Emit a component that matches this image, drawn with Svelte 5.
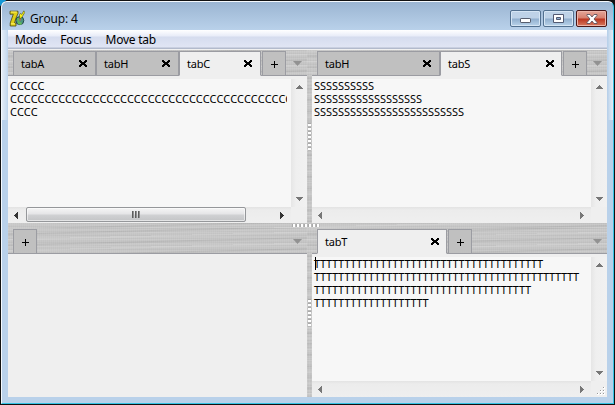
<script>
  const panes = [
    {
      id: 'tl', tabs: [{ name: 'tabA', w: 83 }, { name: 'tabH', w: 83 }, { name: 'tabC', w: 82, active: true }],
      lines: [5, 44, 4].map((n) => 'C'.repeat(n)), letter: 'c', thumb: true
    },
    {
      id: 'tr', tabs: [{ name: 'tabH', w: 123 }, { name: 'tabS', w: 122, active: true }],
      lines: [10, 18, 25].map((n) => 'S'.repeat(n)), letter: 's'
    },
    { id: 'bl', tabs: [], lines: null },
    {
      id: 'br', tabs: [{ name: 'tabT', w: 130, active: true }],
      lines: [38, 44, 36, 19].map((n) => 'T'.repeat(n)), letter: 't', caret: true
    }
  ];
  const menu = ['Mode', 'Focus', 'Move tab'];
</script>

{#snippet arrow(dir)}
  <svg class="arrow" width="7" height="7" viewBox="0 0 7 7" shape-rendering="crispEdges">
    {#if dir === 'up'}<path d="M3 1h1v1h1v1h1v1h1v1H0V4h1V3h1V2h1z" />
    {:else if dir === 'down'}<path d="M0 2h7v1H6v1H5v1H4v1H3V5H2V4H1V3H0z" />
    {:else if dir === 'left'}<path d="M4 0h1v7H4V6H3V5H2V4H1V3h1V2h1V1h1z" />
    {:else}<path d="M2 0h1v1h1v1h1v1h1v1H5v1H4v1H3v1H2z" />{/if}
  </svg>
{/snippet}

{#snippet pane(p)}
  <section class="pane {p.id}">
    <div class="bar">
      {#each p.tabs as t}
        <div class="tab" class:active={t.active} style="width:{t.w}px">
          <span>{t.name}</span>
          <svg width="8" height="7" viewBox="0 0 8 7" shape-rendering="crispEdges"><path d="M0 0h2v1h1v1h2V1h1V0h2v1H8v1H7v1H6v1h1v1h1v2H6V6H5V5H3v1H2v1H0V5h1V4h1V3H1V2H0z" /></svg>
        </div>
      {/each}
      <div class="tab plus"><svg width="7" height="7" viewBox="0 0 7 7" shape-rendering="crispEdges"><path d="M3 0h1v3h3v1H4v3H3V4H0V3h3z" /></svg></div>
      <svg class="drop" width="9" height="5" viewBox="0 0 9 5"><path d="M0 0h9L4.5 5z" /></svg>
    </div>
    {#if p.lines}
      <div class="memo">
        <div class="text {p.letter}">
          {#if p.caret}<i class="caret"></i>{/if}
          {#each p.lines as l}<div>{l}</div>{/each}
        </div>
        <div class="vs">{@render arrow('up')}{@render arrow('down')}</div>
        <div class="hs" class:on={p.thumb}>
          {@render arrow('left')}
          {#if p.thumb}<div class="thumb"><i></i><i></i><i></i></div>{/if}
          {@render arrow('right')}
        </div>
        <div class="corner">
          {#if p.caret}
            <svg width="8" height="8" viewBox="0 0 8 8" shape-rendering="crispEdges"><path d="M6 0h2v2H6zM3 3h2v2H3zM6 3h2v2H6zM0 6h2v2H0zM3 6h2v2H3zM6 6h2v2H6z" fill="#fff" /><path d="M6 0h1v1H6zM3 3h1v1H3zM6 3h1v1H6zM0 6h1v1H0zM3 6h1v1H3zM6 6h1v1H6z" fill="#999" /></svg>
          {/if}
        </div>
      </div>
    {/if}
  </section>
{/snippet}

<div class="desktop">
  <div class="window">
    <header>
      <svg class="logo" width="16" height="17" viewBox="0 0 16 17">
        <circle cx="10.8" cy="10.6" r="4" fill="#4b9580" stroke="#25484b" />
        <path d="M8 8l2 0 0 3 3 2-1 2-3-1z" fill="#62b859" />
        <path d="M10 8.5h2v2h-2z" fill="#b46754" />
        <path d="M1 1.2h8v2.3L6.6 9l-1 4H7v3H1.2v-3L4.3 4.2H1z" fill="#e0cf18" stroke="#4a4410" stroke-width=".8" />
        <path d="M1.8 2h6M2 13.8h4" stroke="#fff36a" stroke-width="1" />
        <path d="M11 9l-.6-4 1-1.6 1.4 1 2-3.6 1 1.6-3 5z" fill="#f8f41c" stroke="#4b4c12" stroke-width=".6" />
      </svg>
      <h1>Group: 4</h1>
      <div class="buttons">
        <b><svg width="11" height="5" viewBox="0 0 11 5"><rect x=".5" y=".5" width="10" height="4" rx=".6" fill="#fff" stroke="#565d6d" /></svg></b>
        <b><svg width="11" height="9" viewBox="0 0 11 9"><path d="M.5.5h10v8H.5z" fill="#fff" stroke="#535a72" /><path d="M3.5 3.5h4v2h-4z" fill="#8fb0d1" stroke="#535a72" /></svg></b>
        <b class="close"><svg width="12" height="10" viewBox="0 0 12 10"><path d="M1 .5h3L6 3 8 .5h3v1L8 5l3 3.5v1H8L6 7 4 9.5H1v-1L4 5 1 1.5z" fill="#fff" stroke="#5d5360" stroke-width=".9" /></svg></b>
      </div>
    </header>
    <main>
      <nav>{#each menu as m}<span>{m}</span>{/each}</nav>
      <div class="grid">
        {@render pane(panes[0])}
        <div class="vsplit one"><i></i></div>
        {@render pane(panes[1])}
        <div class="hsplit"><i></i></div>
        {@render pane(panes[2])}
        <div class="vsplit two"><i></i></div>
        {@render pane(panes[3])}
      </div>
    </main>
  </div>
</div>

<style>
  :global(body) { margin: 0; overflow: hidden; }
  * { box-sizing: border-box; }
  .desktop { width: 615px; height: 405px; background: linear-gradient(135deg, #1597d5 0 4px, #111 5px); padding: 1px; font: 11px/13px "Noto Sans", "Open Sans", sans-serif; color: #000; }
  .window {
    height: 403px; border: 1px solid #35c3e4; border-top-color: #f5f9fd; border-left-color: #f4f9fe; border-radius: 6px 6px 0 0; padding: 0 5px 6px 6px;
    background: linear-gradient(#9bb5d2, #b9d1ea 28px, transparent 28px), linear-gradient(90deg, #fff9, #fff3 5px, transparent 6px calc(100% - 5px), #fff3 calc(100% - 4px), #fff9) 0 0 / 100% 118px no-repeat, #b9d1ea;
  }
  header { height: 28px; display: flex; align-items: flex-start; padding: 8px 1px 0 1px; }
  h1 { margin: 0 0 0 5px; font: 12px/17px "Open Sans", "Noto Sans", sans-serif; letter-spacing: -.1px; flex: 1; }
  .buttons { display: flex; gap: 2px; }
  .buttons b { width: 31px; height: 17px; display: flex; align-items: center; justify-content: center; border: 1px solid #52708f; border-radius: 2px; box-shadow: inset 0 0 0 1px #d5e5f4; background: linear-gradient(#bed2e7 0 7px, #91afce 8px, #b9d3ea); }
  .buttons b:first-child { padding-top: 4px; }
  .buttons .close { border-color: #4b1717; background: linear-gradient(#e4a699, #d77f6e 7px, #bb3520 8px, #d77960); box-shadow: inset 0 0 0 1px #edb5a9; }
  main { width: 599px; height: 367px; display: flex; flex-direction: column; }
  nav { height: 20px; display: flex; gap: 14px; padding: 3px 7px 0; font-size: 12px; line-height: 14px; letter-spacing: -.24px; border-bottom: 1px solid #f0f0f0; background: linear-gradient(#fff 0, #e8ecf8 6px, #d5dcee 7px, #e0e5f4 17px, #b2bacc 18px 19px); }
  .grid { height: 347px; display: grid; grid-template: 173px 5px 169px / 299px 5px 295px; }
  .hsplit { grid-column: 1 / 4; display: flex; justify-content: center; padding-right: 4px; }
  .vsplit { display: flex; justify-content: center; align-items: center; }
  .vsplit, .hsplit, .bar {
    background:
      repeating-linear-gradient(90deg, #fff1 0 1px, #0000 1px 2px),
      repeating-linear-gradient(178.6deg, #fff2 0 1px, #0000 2px 5px, #0001 6px, #fff1 8px, #0000 9px 11px),
      repeating-linear-gradient(#bfbfbf 0 1px, #c6c6c6 1px 3px, #c1c1c1 3px 4px, #c8c8c8 4px 5px, #c3c3c3 5px 7px);
  }
  .vsplit i { width: 3px; height: 28px; background: repeating-linear-gradient(#aaa 0 1px, #fff 1px 3px, #b8b8b8 3px 4px); }
  .hsplit i { width: 28px; height: 3px; margin-top: 1px; background: repeating-linear-gradient(90deg, #aaa 0 1px, #fff 1px 3px, #b8b8b8 3px 4px); }
  .pane { min-width: 0; min-height: 0; display: flex; flex-direction: column; background: #efefef; }
  .bar { height: 26px; flex: none; display: flex; padding: 1px 5px 0; border-bottom: 1px solid #9b9ca2; }
  .tab { height: 25px; flex: none; margin-bottom: -1px; padding: 0 8px 0 7px; display: flex; align-items: center; justify-content: space-between; background: #c0c0c0; border: 1px solid #9b9ca2; letter-spacing: -.25px; }
  .tab span { margin-top: -1px; }
  .tab.active { background: #efefef; border-bottom-color: #efefef; }
  .tr .active, .br .active { padding-right: 7px; }
  .tab.plus { width: 24px; margin-left: 1px; padding: 2px 0 0; justify-content: center; }
  .bl .plus { margin-left: 0; }
  .drop { margin: 10px 0 0 auto; fill: #929292; }
  .memo { margin-top: 3px; flex: 1; min-height: 0; display: grid; grid-template: 1fr 16px / 1fr 16px; }
  .text { position: relative; background: #f7f7f7; padding: 0 0 0 2px; overflow: hidden; min-width: 0; }
  .text div { white-space: nowrap; }
  .tl .text { border-right: 4px solid #f7f7f7; }
  .c { letter-spacing: .15px; }
  .s { letter-spacing: -.04px; }
  .t { letter-spacing: -.31px; }
  .caret { position: absolute; left: 3px; top: 0; width: 1px; height: 13px; background: #000; }
  .vs { display: flex; flex-direction: column; justify-content: space-between; align-items: center; padding: 5px 0; background: linear-gradient(90deg, #e6e6e6, #efefef 5px, #f1f1f1); }
  .hs { display: flex; align-items: center; justify-content: space-between; padding: 0 6px 0 5px; background: linear-gradient(#e3e3e3, #ececec 3px, #efefef); }
  .arrow { fill: #777; flex: none; }
  .on .arrow { fill: #333; }
  .thumb { width: 220px; height: 15px; margin: 0 auto 1px 6px; display: flex; align-items: center; justify-content: center; gap: 1px; border: 1px solid #95979a; border-radius: 2px; background: linear-gradient(#f5f5f5, #e5e5e7 6px, #d0d1d3 7px, #c3c4c6); box-shadow: inset 0 0 0 1px #fff8; }
  .thumb i { width: 2px; height: 7px; background: linear-gradient(90deg, #444, #aaa); }
  .corner { background: #efefef; display: flex; justify-content: flex-end; align-items: flex-end; padding: 2px; }
</style>
